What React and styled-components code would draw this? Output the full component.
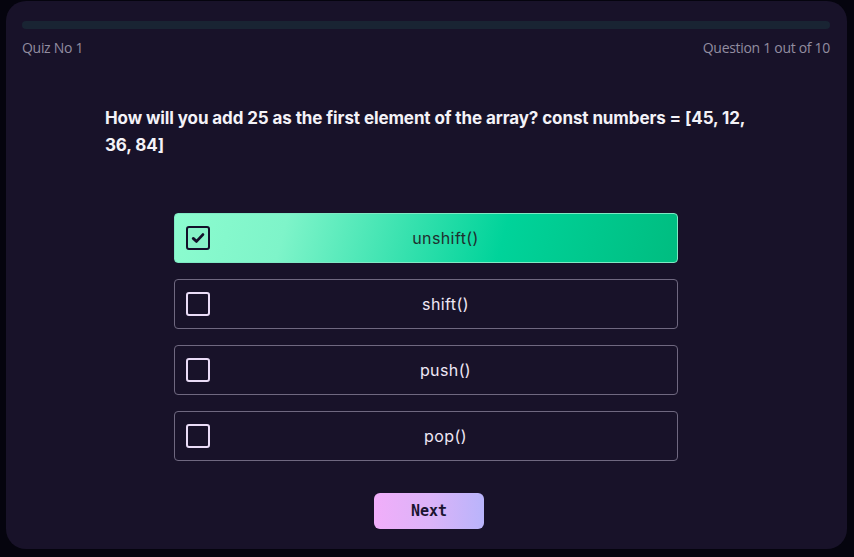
import React, { useState } from "react";
import styled, { createGlobalStyle } from "styled-components";

const GlobalStyle = createGlobalStyle`
  html, body {
    margin: 0;
    padding: 0;
    background: #05040e;
    font-family: "Inter", "Liberation Sans", sans-serif;
  }
`;

const options = ["unshift()", "shift()", "push()", "pop()"];

const CheckIcon = () => (
  <svg width="16" height="16" viewBox="0 0 16 16">
    <path
      d="M3.2 8.4 L6.5 11.4 L12.9 4.6"
      fill="none"
      stroke="#13102a"
      strokeWidth="2.8"
      strokeLinecap="round"
      strokeLinejoin="round"
    />
  </svg>
);

const App = () => {
  const [selected, setSelected] = useState(0);
  return (
    <>
      <GlobalStyle />
      <Screen>
        <Card>
          <Progress>
            <ProgressFill style={{ width: "0%" }} />
          </Progress>
          <Meta>
            <span>Quiz No 1</span>
            <span>Question 1 out of 10</span>
          </Meta>
          <Question>
            How will you add 25 as the first element of the array? const numbers
            = [45, 12, 36, 84]
          </Question>
          <Options>
            {options.map((opt, i) => (
              <Option
                key={opt}
                $active={selected === i}
                onClick={() => setSelected(i)}
              >
                <Box $active={selected === i}>
                  {selected === i && <CheckIcon />}
                </Box>
                <OptionText $active={selected === i}>{opt}</OptionText>
              </Option>
            ))}
          </Options>
          <Footer>
            <NextButton>Next</NextButton>
          </Footer>
        </Card>
      </Screen>
    </>
  );
};

export default App;

const Screen = styled.div`
  width: 854px;
  height: 557px;
  padding: 1px 7px 8px 6px;
  box-sizing: border-box;
`;

const Card = styled.div`
  height: 100%;
  background: #181229;
  border-radius: 20px;
  padding: 20px 17px 0 16px;
  box-sizing: border-box;
  display: flex;
  flex-direction: column;
`;

const Progress = styled.div`
  height: 8px;
  border-radius: 4px;
  background: #192433;
  overflow: hidden;
`;

const ProgressFill = styled.div`
  height: 100%;
  background: #00c586;
`;

const Meta = styled.div`
  display: flex;
  justify-content: space-between;
  margin-top: 9px;
  font-family: "Open Sans", "Lato", sans-serif;
  font-size: 14px;
  font-weight: 500;
  color: #928da0;
  letter-spacing: -0.3px;
`;

const Question = styled.h2`
  margin: 48px 0 0;
  padding: 0 70px 0 83px;
  font-size: 17px;
  font-weight: 700;
  line-height: 27px;
  letter-spacing: -0.1px;
  color: #f4f2f8;
`;

const Options = styled.div`
  margin: 54px auto 0;
  width: 504px;
  display: flex;
  flex-direction: column;
  gap: 16px;
`;

const Option = styled.div`
  height: 50px;
  box-sizing: border-box;
  display: flex;
  align-items: center;
  padding-left: 11px;
  border-radius: 4px;
  cursor: pointer;
  border: 1px solid ${(p) => (p.$active ? "#7fe9c4" : "#6f6880")};
  background: ${(p) =>
    p.$active
      ? "linear-gradient(105deg, #8cfccf 0%, #7ef4c9 22%, #00d39a 65%, #00bd80 100%)"
      : "transparent"};
`;

const Box = styled.div`
  width: 24px;
  height: 24px;
  box-sizing: border-box;
  border-radius: 3px;
  border: ${(p) => (p.$active ? "2.5px solid #13102a" : "2px solid #eadcf7")};
  background: ${(p) => (p.$active ? "#86f3c8" : "transparent")};
  display: flex;
  align-items: center;
  justify-content: center;
`;

const OptionText = styled.div`
  flex: 1;
  text-align: center;
  padding-left: 4px;
  font-size: 16px;
  letter-spacing: 0.4px;
  color: ${(p) => (p.$active ? "#1f2f2e" : "#efe7f5")};
`;

const Footer = styled.div`
  display: flex;
  justify-content: center;
  margin-top: 32px;
  padding-left: 6px;
`;

const NextButton = styled.button`
  width: 110px;
  height: 36px;
  border: none;
  border-radius: 6px;
  background: linear-gradient(90deg, #f1aefa 0%, #dcb3f8 50%, #b9b4fb 100%);
  font-family: "DejaVu Sans Mono", "Liberation Mono", monospace;
  font-weight: 700;
  font-size: 15px;
  color: #1a1530;
  cursor: pointer;
`;
